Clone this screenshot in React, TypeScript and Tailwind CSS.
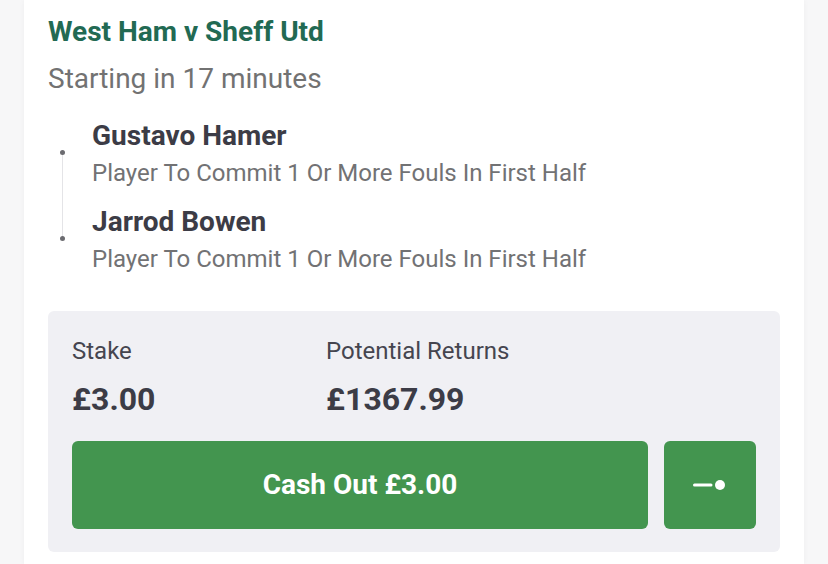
export default function App() {
  const legs = [
    { name: 'Gustavo Hamer', market: 'Player To Commit 1 Or More Fouls In First Half' },
    { name: 'Jarrod Bowen', market: 'Player To Commit 1 Or More Fouls In First Half' },
  ];

  return (
    <div
      className="w-[828px] h-[564px] overflow-hidden bg-[#f7f7f8] px-[24px]"
      style={{ fontFamily: 'Roboto, "Liberation Sans", sans-serif' }}
    >
      <div className="h-full bg-white px-[24px] pt-[14px] shadow-[0_0_6px_rgba(0,0,0,0.04)]">
        {/* Event header */}
        <div className="text-[28px] leading-[36px] font-bold text-[#226a53]">West Ham v Sheff Utd</div>
        <div className="mt-[11px] text-[28px] leading-[36px] text-[#727272]">Starting in 17 minutes</div>

        {/* Selections */}
        <div className="relative mt-[21px] pl-[44px]">
          <div className="absolute left-[14px] top-[34px] h-[86px] w-px bg-[#e4e4e7]" />
          {legs.map((leg, i) => (
            <div key={leg.name} className={`relative ${i > 0 ? 'mt-[15px]' : ''}`}>
              <div className="absolute left-[-32px] top-[32px] h-[5px] w-[5px] rounded-full bg-[#6b6b70]" />
              <div className="text-[28px] leading-[36px] font-bold text-[#3c3c46]">{leg.name}</div>
              <div className="mt-[3px] text-[24px] leading-[32px] text-[#727274]">{leg.market}</div>
            </div>
          ))}
        </div>

        {/* Stake box */}
        <div className="mt-[36px] rounded-[6px] bg-[#f0f0f4] px-[24px] pt-[24px] pb-[23px]">
          <div className="flex">
            <div className="w-[254px]">
              <div className="text-[24px] leading-[32px] text-[#45454f]">Stake</div>
              <div className="mt-[12px] text-[32px] leading-[40px] font-bold text-[#3c3c46]">£3.00</div>
            </div>
            <div>
              <div className="text-[24px] leading-[32px] text-[#45454f]">Potential Returns</div>
              <div className="mt-[12px] text-[32px] leading-[40px] font-bold text-[#3c3c46]">£1367.99</div>
            </div>
          </div>
          <div className="mt-[22px] flex gap-[16px]">
            <button className="h-[88px] flex-1 rounded-[6px] bg-[#43954f] text-[28px] font-bold text-white">
              Cash Out £3.00
            </button>
            <button className="flex h-[88px] w-[92px] items-center justify-center rounded-[6px] bg-[#43954f]">
              <svg width="34" height="12" viewBox="0 0 34 12">
                <line x1="1.5" y1="6" x2="18" y2="6" stroke="white" strokeWidth="3" strokeLinecap="round" />
                <circle cx="27" cy="6" r="5" fill="white" />
              </svg>
            </button>
          </div>
        </div>
      </div>
    </div>
  );
}
